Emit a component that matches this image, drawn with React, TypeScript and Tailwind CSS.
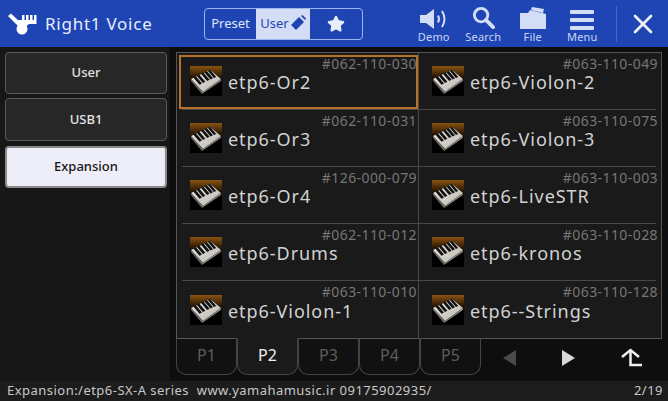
import { Star, X } from 'lucide-react';

const voices = [
  { name: 'etp6-Or2', code: '#062-110-030', selected: true },
  { name: 'etp6-Violon-2', code: '#063-110-049' },
  { name: 'etp6-Or3', code: '#062-110-031' },
  { name: 'etp6-Violon-3', code: '#063-110-075' },
  { name: 'etp6-Or4', code: '#126-000-079' },
  { name: 'etp6-LiveSTR', code: '#063-110-003' },
  { name: 'etp6-Drums', code: '#062-110-012' },
  { name: 'etp6-kronos', code: '#063-110-028' },
  { name: 'etp6-Violon-1', code: '#063-110-010' },
  { name: 'etp6--Strings', code: '#063-110-128' }
];

const pages = ['P1', 'P2', 'P3', 'P4', 'P5'];

function PianoThumb() {
  return (
    <svg width="32" height="30" viewBox="0 0 32 30" className="shrink-0">
      <defs>
        <linearGradient id="thumbBg" x1="0" y1="0" x2="0" y2="1">
          <stop offset="0" stopColor="#8a5310" />
          <stop offset="0.35" stopColor="#2c1905" />
          <stop offset="0.55" stopColor="#000000" />
        </linearGradient>
        <linearGradient id="thumbKeys" x1="0" y1="0" x2="1" y2="1">
          <stop offset="0" stopColor="#f0eee8" />
          <stop offset="1" stopColor="#b5b3ab" />
        </linearGradient>
      </defs>
      <rect width="32" height="30" fill="url(#thumbBg)" />
      <path d="M1 13 L20 4 L31 13 L13 26 Z" fill="url(#thumbKeys)" />
      <path d="M1 13 L13 26 L12 28 L1 15 Z" fill="#6e6c66" />
      <path d="M13 26 L31 13 L31 15 L12 28 Z" fill="#85837c" />
      <path d="M3.300 11.500 L5.800 10.300 L12 17.500 L9.500 18.700 Z M6.700 9.800 L9.200 8.600 L15.400 15.800 L12.900 17 Z M10.900 7.800 L13.400 6.600 L19.600 13.800 L17.100 15 Z M14.300 6.200 L16.800 5 L23 12.200 L20.500 13.400 Z M17.700 4.800 L20 3.800 L26.200 11 L23.900 12 Z" fill="#111111" />
    </svg>
  );
}

function KeyboardLogo() {
  return (
    <svg width="32" height="24" viewBox="0 0 32 24" fill="white">
      <path d="M15 3 h2.500 v5 h1.500 V3 h2.500 v5 h1.500 V3 h2.500 v5 h1.500 V3 h2.500 V12 H22 L17 16 L10 8 h5 Z" />
      <path d="M1 4 L4 1.500 L14 11 L11 14 Z" />
      <circle cx="15" cy="17" r="5.500" />
    </svg>
  );
}

function HeaderAction({ label, children }: { label: string; children: React.ReactNode }) {
  return (
    <div className="flex w-[49.5px] flex-col items-center">
      <div className="flex h-[28px] items-end justify-center">{children}</div>
      <span className="-mt-[2px] text-[11px] leading-[15px] tracking-[0.2px] text-[#c9d5f3]">{label}</span>
    </div>
  );
}

export default function App() {
  return (
    <div className="flex h-[401px] w-[668px] flex-col overflow-hidden bg-[#171717] font-['Noto_Sans',sans-serif] text-white">
      <header className="flex h-[47px] shrink-0 items-center bg-[#1f45b5]">
        <div className="ml-[7px] flex w-[33px] items-center">
          <KeyboardLogo />
        </div>
        <h1 className="ml-[5px] w-[159px] text-[17px] tracking-[0.75px] text-[#e8edfa]">Right1 Voice</h1>
        <div className="flex h-[32px] w-[159px] overflow-hidden rounded-[4px] border border-[#9db4ee]">
          <div className="flex w-[51px] items-center justify-center text-[13px] text-[#dfe6f8]">Preset</div>
          <div className="flex w-[54px] items-center justify-center bg-[#d3ddf5] text-[13px] text-[#1f45b5]">
            User
            <svg width="17" height="17" viewBox="0 0 17 17" fill="#1f45b5">
              <path d="M10 2 L15 7 L7 15 L2 10 Z" />
              <path d="M12 1 L13.500 0 L17 3.500 L16 5 Z" />
            </svg>
          </div>
          <div className="flex flex-1 items-center justify-center pr-px">
            <Star size={18} fill="#e8edfa" stroke="#e8edfa" />
          </div>
        </div>
        <div className="ml-[46px] flex items-center">
          <HeaderAction label="Demo">
            <svg width="28" height="20" viewBox="0 0 28 20" fill="none" className="mb-[2px]">
              <path d="M0 6 H6 L14 0 V20 L6 14 H0 Z" fill="#d3ddf5" />
              <path d="M18 6.500 Q20 10 18 13.500" stroke="#d3ddf5" strokeWidth="2" />
              <path d="M22 2 Q27 10 22 18" stroke="#d3ddf5" strokeWidth="2" />
            </svg>
          </HeaderAction>
          <HeaderAction label="Search">
            <svg width="23" height="23" viewBox="0 0 24 24" fill="none" stroke="#d3ddf5" className="mb-[2px]">
              <circle cx="9.500" cy="9.500" r="7" strokeWidth="3" />
              <path d="M14.500 14.500 L22 22" strokeWidth="4" strokeLinecap="round" />
            </svg>
          </HeaderAction>
          <HeaderAction label="File">
            <svg width="26" height="23" viewBox="0 0 26 23" fill="#d3ddf5" className="mb-[2px]">
              <path d="M0 7 L8 7 L10 4 L26 8 V23 H0 Z" />
              <path d="M12 1 L24 3 L23 7 L11 4 Z" />
            </svg>
          </HeaderAction>
          <HeaderAction label="Menu">
            <div className="mb-[1px] flex w-[24px] flex-col gap-[4px]">
              <div className="h-[4px] rounded-[1px] bg-[#d3ddf5]" />
              <div className="h-[4px] rounded-[1px] bg-[#d3ddf5]" />
              <div className="h-[4px] rounded-[1px] bg-[#d3ddf5]" />
            </div>
          </HeaderAction>
        </div>
        <div className="ml-[9px] h-[36px] w-px bg-[#4467c9]" />
        <div className="flex flex-1 items-center justify-center">
          <X size={32} stroke="#f0f3fb" strokeWidth={2} />
        </div>
      </header>

      <main className="flex flex-1 bg-[#0e0e0e]">
        <aside className="flex h-[334px] w-[170px] shrink-0 flex-col bg-[#171717] pt-[5px] pr-[3px] pl-[5px]">
          <button className="h-[42px] rounded-[4px] border border-[#5a5a5a] bg-[#272727] text-[13px] font-medium text-[#e4e4e4]">User</button>
          <button className="mt-[4px] h-[43px] rounded-[4px] border border-[#5a5a5a] bg-[#272727] text-[13px] font-medium text-[#e4e4e4]">USB1</button>
          <button className="mt-[5px] h-[42px] rounded-[4px] border-2 border-[#8a8a8a] bg-[#eeeef8] text-[13px] font-medium text-[#151515]">Expansion</button>
        </aside>

        <section className="ml-[6px] flex w-[486px] flex-col pt-[5px]">
          <div className="grid h-[287px] grid-cols-2 grid-rows-5 border border-[#555] bg-[#1a1a1a]">
            {voices.map((voice, i) => (
              <div key={voice.code} className={`relative ${i % 2 === 0 ? 'border-r border-[#4a4a4a]' : ''}`}>
                <div className={`flex h-full items-center ${i % 2 === 0 ? 'ml-[5px] pl-[8px]' : 'mr-[5px] pl-[13px]'} ${i < 8 ? 'border-b border-[#484848]' : ''}`}>
                  <div className="flex items-center gap-[6px]">
                    <PianoThumb />
                    <span className="mt-[3px] text-[18px] tracking-[0.95px] text-[#d2d2d2]">{voice.name}</span>
                  </div>
                </div>
                <span className={`absolute top-0 text-[14px] tracking-[0.42px] text-[#767676] ${i % 2 === 0 ? 'right-px' : 'right-[3px]'}`}>{voice.code}</span>
                {voice.selected && (
                  <div className="absolute top-[2px] right-0 bottom-px left-[2px] border-2 border-[#b8702e]" />
                )}
              </div>
            ))}
          </div>
          <div className="flex h-[37px] items-start">
            {pages.map((page) => (
              <div
                key={page}
                className={`-mt-px flex h-[37px] w-[61px] items-center justify-center rounded-b-[10px] border border-[#444] pb-[3px] text-[16px] ${page === 'P2' ? 'border-t-transparent bg-[#1a1a1a] text-[#f0f0f0]' : 'border-t-[#555] bg-[#111] text-[#5e5e5e]'}`}
              >
                {page}
              </div>
            ))}
            <div className="flex h-[37px] flex-1 items-center">
              <div className="mt-[1px] ml-[22px] h-0 w-0 border-y-[8px] border-r-[13px] border-y-transparent border-r-[#4a4a4a]" />
              <div className="mt-[1px] ml-[46px] h-0 w-0 border-y-[8px] border-l-[13px] border-y-transparent border-l-[#d8d8d8]" />
              <svg width="22" height="20" viewBox="0 0 22 20" fill="none" stroke="#f0f0f0" strokeWidth="2.500" className="ml-[46px]">
                <path d="M1 9 L9.500 2 L18 9" />
                <path d="M9.500 2 V17 H21" />
              </svg>
            </div>
          </div>
        </section>
      </main>

      <footer className="flex h-[20px] shrink-0 items-center justify-between bg-[#1c1c1c] pr-[5px] pl-[7px] text-[13px] tracking-[0.47px] whitespace-pre text-[#c8c8c8]">
        <span>Expansion:/etp6-SX-A series  www.yamahamusic.ir 09175902935/</span>
        <span>2/19</span>
      </footer>
    </div>
  );
}
